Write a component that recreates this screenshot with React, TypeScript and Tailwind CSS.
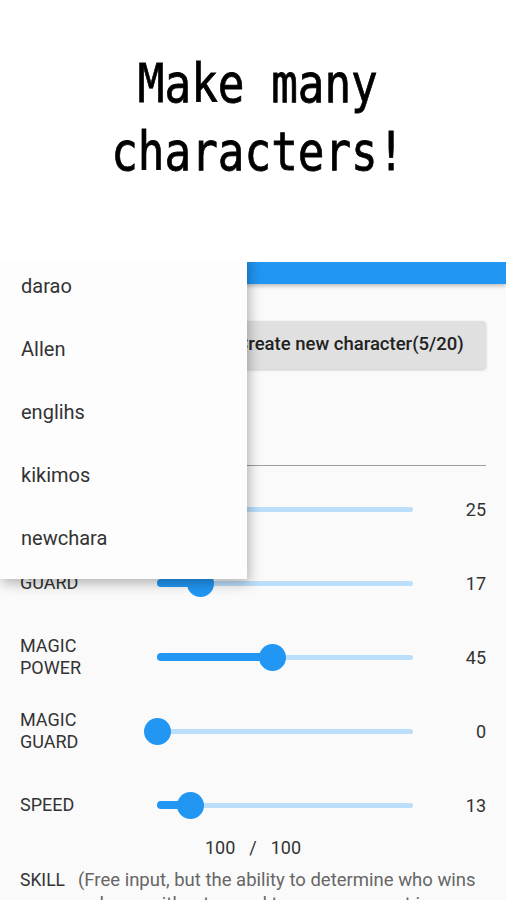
import React from 'react';

interface Stat {
  label: string[];
  value: number;
}

const stats: Stat[] = [
  { label: ['POWER'], value: 25 },
  { label: ['GUARD'], value: 17 },
  { label: ['MAGIC', 'POWER'], value: 45 },
  { label: ['MAGIC', 'GUARD'], value: 0 },
  { label: ['SPEED'], value: 13 },
];

const characters = ['darao', 'Allen', 'englihs', 'kikimos', 'newchara'];

const StatSlider: React.FC<{ stat: Stat }> = ({ stat }) => {
  const pct = stat.value;
  return (
    <div className="h-[52px] flex items-center">
      <div className="w-[137px] text-[18px] leading-[22px] text-[#333]">
        {stat.label.map((l) => (
          <div key={l}>{l}</div>
        ))}
      </div>
      <div className="relative w-[256px] h-[28px] flex items-center">
        <div className="absolute left-0 right-0 h-[5px] rounded-full bg-[#bbdefb]" />
        <div
          className="absolute left-0 h-[8px] rounded-full bg-[#2196f3]"
          style={{ width: `${pct}%` }}
        />
        <div
          className="absolute w-[27px] h-[27px] -ml-[13.5px] rounded-full bg-[#2196f3]"
          style={{ left: `${pct}%` }}
        />
      </div>
      <div className="flex-1 text-right text-[18px] text-[#333]">{stat.value}</div>
    </div>
  );
};

const App: React.FC = () => {
  return (
    <div className="w-[506px] h-[900px] overflow-hidden bg-white flex flex-col" style={{ fontFamily: 'Roboto, "Noto Sans", sans-serif' }}>
      <div className="h-[262px] shrink-0 pt-[50px] pl-[10px] flex flex-col items-center">
        <h1
          className="text-[54px] leading-[68px] text-black scale-x-[0.82] text-center whitespace-nowrap [-webkit-text-stroke:0.8px_#000]"
          style={{ fontFamily: '"DejaVu Sans Mono", "Liberation Mono", monospace' }}
        >
          <div>Make many</div>
          <div>characters!</div>
        </h1>
      </div>

      <div className="relative flex-1 overflow-hidden bg-[#fafafa]">
        <div className="h-[22px] bg-[#2196f3] shadow-[0_2px_4px_rgba(0,0,0,0.25)]" />

        <div className="px-[20px]">
          <div className="flex justify-end mt-[37px]">
            <button className="h-[48px] w-[272px] rounded-[4px] bg-[#e0e0e0] shadow-[0_1px_3px_rgba(0,0,0,0.2)] text-[18.5px] font-medium text-[#222]">
              Create new character(5/20)
            </button>
          </div>

          <div className="h-[97px] border-b border-[#9e9e9e]" />

          <div className="mt-[17px] flex flex-col gap-[22px]">
            {stats.map((s) => (
              <StatSlider key={s.label.join(' ')} stat={s} />
            ))}
          </div>

          <div className="mt-[5px] leading-[24px] text-[18px] text-[#333] flex justify-center gap-[14px]">
            <span>100</span>
            <span>/</span>
            <span>100</span>
          </div>

          <div className="mt-[8px] flex leading-[24px]">
            <div className="w-[58px] shrink-0 text-[17.5px] text-[#333]">SKILL</div>
            <div className="flex-1 text-[18.5px] text-[#666]">
              (Free input, but the ability to determine who wins or loses without regard to your opponent is a foul)
            </div>
          </div>
        </div>

        <div className="absolute left-0 top-[-8px] w-[247px] bg-[#fdfdfd] pb-[10px] shadow-[2px_4px_12px_rgba(0,0,0,0.3)]">
          {characters.map((c) => (
            <div key={c} className="h-[63px] flex items-center pl-[21px] text-[20px] text-[#333]">
              {c}
            </div>
          ))}
        </div>
      </div>
    </div>
  );
};

export default App;
